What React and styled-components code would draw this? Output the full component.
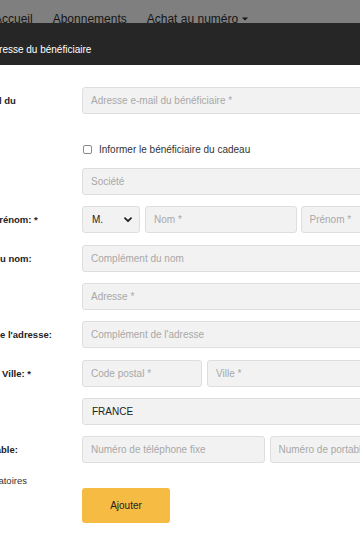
import styled, { createGlobalStyle } from 'styled-components'

const GlobalStyle = createGlobalStyle`
  html, body {
    margin: 0;
    padding: 0;
    overflow: hidden;
  }
  body {
    font-family: "Liberation Sans", Arial, sans-serif;
    background: #7f7f7f;
  }
`

const Caret = () => (
  <svg width="6" height="4" viewBox="0 0 6 4">
    <path d="M0 0.5 L6 0.5 L3 3.5 Z" fill="#141414" />
  </svg>
)

const Chevron = () => (
  <svg width="8" height="6" viewBox="0 0 8 6">
    <path d="M1 1.2 L4 4.2 L7 1.2" fill="none" stroke="#222" strokeWidth="1.8" strokeLinecap="round" strokeLinejoin="round" />
  </svg>
)

export default function App() {
  return (
    <>
      <GlobalStyle />
      <Page>
        <Nav>
          <NavItem>Accueil</NavItem>
          <NavItem>Abonnements</NavItem>
          <NavItem>Achat au numéro <Caret /></NavItem>
        </Nav>
        <Modal>
          <ModalHeader>Ajouter une adresse du bénéficiaire</ModalHeader>
          <ModalBody>
            <Form>
              <Label>Adresse e-mail du bénéficiaire: *</Label>
              <Input placeholder="Adresse e-mail du bénéficiaire *" />

              <Spacer />
              <CheckRow>
                <Box />
                Informer le bénéficiaire du cadeau
              </CheckRow>

              <Label>Société:</Label>
              <Input placeholder="Société" />

              <Label>Titre, nom et prénom: *</Label>
              <Group>
                <SelectBox $width="58px">
                  M.
                  <Chevron />
                </SelectBox>
                <Input placeholder="Nom *" />
                <Input placeholder="Prénom *" />
              </Group>

              <Label>Complément du nom:</Label>
              <Input placeholder="Complément du nom" />

              <Label>Adresse: *</Label>
              <Input placeholder="Adresse *" />

              <Label>Complément de l'adresse:</Label>
              <Input placeholder="Complément de l'adresse" />

              <Label>Code postal et Ville: *</Label>
              <Group>
                <Input placeholder="Code postal *" $width="120px" />
                <Input placeholder="Ville *" />
              </Group>

              <Label>Pays:</Label>
              <SelectBox>
                FRANCE
                <Chevron />
              </SelectBox>

              <Label>Tél. fixe / portable:</Label>
              <Group>
                <Input placeholder="Numéro de téléphone fixe" />
                <Input placeholder="Numéro de portable" />
              </Group>
            </Form>
            <Note>* Champs obligatoires</Note>
            <ButtonRow>
              <Button>Ajouter</Button>
            </ButtonRow>
          </ModalBody>
        </Modal>
      </Page>
    </>
  )
}

const Page = styled.div`
  width: 360px;
  height: 540px;
  overflow: hidden;
  background: #7f7f7f;
  display: flex;
  flex-direction: column;
`

const Nav = styled.nav`
  height: 23px;
  box-sizing: border-box;
  overflow: hidden;
  padding-top: 15px;
  margin-left: -6px;
  display: flex;
  gap: 20px;
  font-size: 12px;
  line-height: 14px;
  color: #141414;
  white-space: nowrap;
`

const NavItem = styled.span`
  display: flex;
  align-items: center;
  gap: 4px;
`

const Modal = styled.div`
  flex: 1;
  margin-left: -81px;
  width: 560px;
  background: #ffffff;
  display: flex;
  flex-direction: column;
`

const ModalHeader = styled.div`
  height: 42px;
  box-sizing: border-box;
  padding: 21px 15px 0;
  background: #262626;
  color: #ffffff;
  font-size: 10px;
  line-height: 12px;
  white-space: nowrap;
`

const ModalBody = styled.div`
  padding: 22px 15px 0;
`

const Form = styled.div`
  display: grid;
  grid-template-columns: 136px 370px;
  column-gap: 12px;
  row-gap: 11.3px;
`

const Label = styled.div`
  padding-top: 7px;
  font-size: 9.5px;
  line-height: 13px;
  font-weight: bold;
  color: #222;
`

const Spacer = styled.div``

const Group = styled.div`
  display: flex;
  gap: 4px;

  & > :first-child {
    margin-right: 1px;
  }
`

const Input = styled.input`
  flex: ${p => (p.$width ? 'none' : '1')};
  width: ${p => p.$width || 'auto'};
  min-width: 0;
  height: 27px;
  box-sizing: border-box;
  padding: 0 8px;
  border: 1px solid #dedede;
  border-radius: 3px;
  background: #f2f2f2;
  font-family: "Liberation Sans", Arial, sans-serif;
  font-size: 10px;
  color: #222;
  outline: none;

  &::placeholder {
    color: #a8a8a8;
  }
`

const SelectBox = styled.div`
  flex: none;
  width: ${p => p.$width || 'auto'};
  height: 27px;
  box-sizing: border-box;
  padding: 0 7px 0 9px;
  border: 1px solid #dedede;
  border-radius: 3px;
  background: #f2f2f2;
  display: flex;
  align-items: center;
  justify-content: space-between;
  font-size: 10px;
  color: #222;
`

const CheckRow = styled.label`
  padding: 12.5px 0 1px 1px;
  display: flex;
  align-items: center;
  gap: 7px;
  font-size: 10px;
  line-height: 12px;
  color: #333;
`

const Box = styled.span`
  width: 9px;
  height: 9px;
  box-sizing: border-box;
  border: 1px solid #8a8a8a;
  border-radius: 2px;
  background: #fff;
`

const Note = styled.div`
  margin-top: 11px;
  font-size: 9.5px;
  line-height: 13px;
  color: #333;
`

const ButtonRow = styled.div`
  margin-top: 1px;
  padding-left: 148px;
`

const Button = styled.button`
  width: 88px;
  height: 35px;
  border: none;
  border-radius: 3px;
  background: #f6bb42;
  font-family: "Liberation Sans", Arial, sans-serif;
  font-size: 10px;
  color: #222;
`
